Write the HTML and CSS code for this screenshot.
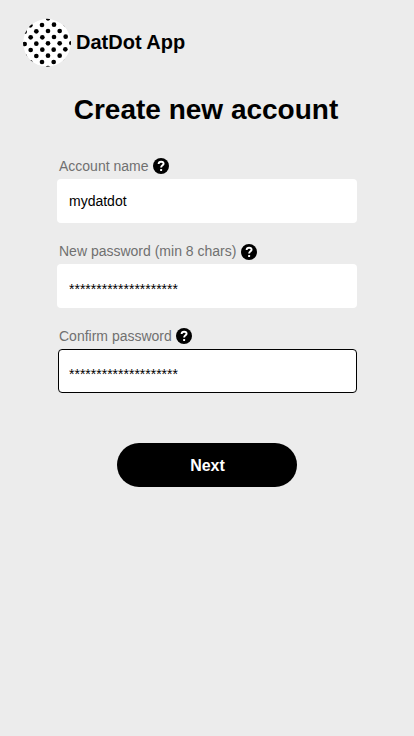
FILE: index.html
```html
<!DOCTYPE html>
<html lang="en">
<head>
<meta charset="utf-8">
<title>DatDot App</title>
<link rel="stylesheet" href="styles.css">
</head>
<body>
<svg class="defs" width="0" height="0" aria-hidden="true">
  <symbol id="help" viewBox="0 0 16 16">
    <circle cx="8" cy="8" r="8"/>
    <path d="M5.6 6C5.7 4.5 6.6 3.7 8.1 3.7s2.5.8 2.5 2c0 1.6-2.5 1.7-2.5 3.9" fill="none" stroke="#fff" stroke-width="1.9"/>
    <rect x="7.1" y="10.9" width="2" height="2" rx=".5" fill="#fff"/>
  </symbol>
</svg>
<header class="brand">
  <svg class="logo" viewBox="18 18 150 150" aria-hidden="true">
    <clipPath id="disc"><circle cx="93" cy="92.5" r="72"/></clipPath>
    <g clip-path="url(#disc)">
      <circle cx="93" cy="92.5" r="72" fill="#fff"/>
      <g>
        <circle cx="96" cy="19" r="7"/>
        <circle cx="43" cy="40" r="7"/><circle cx="78" cy="39" r="7"/><circle cx="114" cy="38" r="7"/><circle cx="149" cy="37" r="7"/>
        <circle cx="26" cy="59" r="7"/><circle cx="61" cy="58" r="7"/><circle cx="96" cy="57" r="7"/><circle cx="131" cy="57" r="7"/><circle cx="166" cy="56" r="7"/>
        <circle cx="44" cy="76" r="7"/><circle cx="79" cy="76" r="7"/><circle cx="114" cy="75" r="7"/><circle cx="149" cy="74" r="7"/>
        <circle cx="26" cy="96" r="7"/><circle cx="61" cy="95" r="7"/><circle cx="96" cy="94" r="7"/><circle cx="131" cy="94" r="7"/><circle cx="166" cy="93" r="7"/>
        <circle cx="44" cy="114" r="7"/><circle cx="79" cy="113" r="7"/><circle cx="113" cy="113" r="7"/><circle cx="148" cy="112" r="7"/>
        <circle cx="26" cy="133" r="7"/><circle cx="61" cy="132" r="7"/><circle cx="96" cy="131" r="7"/><circle cx="131" cy="131" r="7"/><circle cx="166" cy="130" r="7"/>
        <circle cx="43" cy="151" r="7"/><circle cx="78" cy="150" r="7"/><circle cx="113" cy="150" r="7"/><circle cx="149" cy="149" r="7"/>
        <circle cx="96" cy="168" r="7"/>
      </g>
    </g>
  </svg>
  <span class="brand-name">DatDot App</span>
</header>
<main>
  <h1>Create new account</h1>
  <form class="form">
    <div class="field">
      <div class="label"><label for="name">Account name</label><svg class="help"><use href="#help"/></svg></div>
      <input id="name" type="text" value="mydatdot">
    </div>
    <div class="field">
      <div class="label"><label for="pass">New password (min 8 chars)</label><svg class="help help-low"><use href="#help"/></svg></div>
      <input id="pass" class="secret" type="text" value="********************">
    </div>
    <div class="field">
      <div class="label"><label for="confirm">Confirm password</label><svg class="help"><use href="#help"/></svg></div>
      <input id="confirm" class="secret active" type="text" value="********************">
    </div>
    <button class="next" type="button">Next</button>
  </form>
</main>
</body>
</html>
```

FILE: styles.css
```css
* {
  box-sizing: border-box;
}

body {
  margin: 0;
  min-height: 736px;
  background: #ececec;
  color: #000;
  font-family: "Liberation Sans", Arial, sans-serif;
}

.defs {
  display: block;
}

.brand {
  display: flex;
  align-items: center;
  gap: 4px;
  padding: 18px 0 0 22px;
}

.logo {
  width: 50px;
  height: 50px;
}

.brand-name {
  padding-bottom: 2px;
  font-size: 20px;
  font-weight: bold;
  line-height: 24px;
}

h1 {
  margin: 26px 0 0;
  padding-right: 2px;
  font-size: 28px;
  line-height: 32px;
  text-align: center;
}

.form {
  display: flex;
  flex-direction: column;
  width: 300px;
  margin: 32px auto 0;
}

.field {
  height: 85px;
}

.label {
  display: flex;
  align-items: center;
  gap: 4px;
  height: 16px;
  margin: 0 0 5px 2px;
  color: #707070;
  font-size: 14px;
  line-height: 16px;
}

.help {
  width: 16px;
  height: 16px;
  color: #000;
}

.help-low {
  margin: 2px 0 0 1px;
}

input {
  display: block;
  width: 300px;
  height: 44px;
  padding: 0 12px;
  border: 0;
  border-radius: 4px;
  outline: 0;
  background: #fff;
  color: #000;
  font: 14px "Liberation Sans", Arial, sans-serif;
}

.secret {
  padding-top: 6px;
}

.active {
  width: 299px;
  margin-left: 1px;
  padding-left: 10px;
  border: 1px solid #000;
}

.next {
  width: 180px;
  height: 44px;
  margin: 30px auto 0;
  padding: 2px 0 0 1px;
  border: 0;
  border-radius: 22px;
  background: #000;
  color: #fff;
  font: bold 16px "Liberation Sans", Arial, sans-serif;
}
```
